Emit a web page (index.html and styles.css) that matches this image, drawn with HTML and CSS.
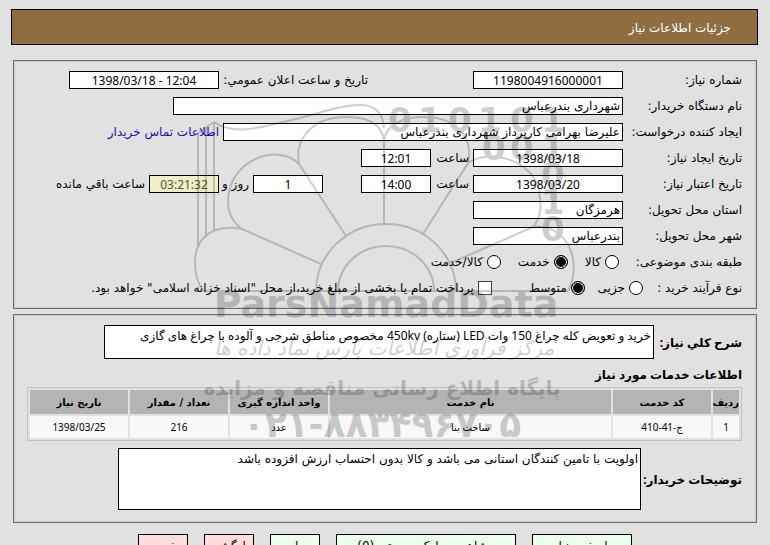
FILE: index.html
```html
<!DOCTYPE html>
<html lang="fa" dir="rtl">
<head>
    <meta charset="UTF-8">
    <meta name="viewport" content="width=device-width, initial-scale=1.0">
    <title>جزئیات اطلاعات نیاز</title>
    <link rel="stylesheet" href="styles.css">
</head>
<body>
    <h1 class="title">جزئیات اطلاعات نیاز</h1>

    <form class="page">
        <fieldset class="box info">
            <div class="row">
                <label class="name" for="needNo">شماره نیاز:</label>
                <input class="mid num" id="needNo" type="text" value="1198004916000001" readonly>
                <label class="announce" for="announceDate">تاریخ و ساعت اعلان عمومي:</label>
                <input class="mid num" id="announceDate" type="text" dir="ltr" value="1398/03/18 - 12:04" readonly>
            </div>
            <div class="row">
                <label class="name" for="buyer">نام دستگاه خریدار:</label>
                <input class="org" id="buyer" type="text" value="شهرداری بندرعباس" readonly>
            </div>
            <div class="row">
                <label class="name" for="creator">ایجاد کننده درخواست:</label>
                <input class="person" id="creator" type="text" value="علیرضا بهرامی کارپرداز شهرداری بندرعباس" readonly>
                <a class="contact" href="#">اطلاعات تماس خریدار</a>
            </div>
            <div class="row">
                <label class="name" for="createDate">تاریخ ایجاد نیاز:</label>
                <input class="mid num" id="createDate" type="text" value="1398/03/18" readonly>
                <label class="hour" for="createTime">ساعت</label>
                <input class="short num" id="createTime" type="text" value="12:01" readonly>
            </div>
            <div class="row">
                <label class="name" for="validDate">تاریخ اعتبار نیاز:</label>
                <input class="mid num" id="validDate" type="text" value="1398/03/20" readonly>
                <label class="hour" for="validTime">ساعت</label>
                <input class="short num" id="validTime" type="text" value="14:00" readonly>
                <input class="short num days" id="days" type="text" value="1" readonly>
                <label class="and" for="days">روز و</label>
                <input class="short num left" id="timeLeft" type="text" value="03:21:32" readonly>
                <label class="remain" for="timeLeft">ساعت باقي مانده</label>
            </div>
            <div class="row">
                <label class="name" for="state">استان محل تحویل:</label>
                <input class="mid" id="state" type="text" value="هرمزگان" readonly>
            </div>
            <div class="row">
                <label class="name" for="city">شهر محل تحویل:</label>
                <input class="mid" id="city" type="text" value="بندرعباس" readonly>
            </div>
            <div class="row">
                <span class="name">طبقه بندی موضوعی:</span>
                <div class="choices kinds">
                    <label><input type="radio" name="kind">کالا</label>
                    <label><input type="radio" name="kind" checked>خدمت</label>
                    <label><input type="radio" name="kind">کالا/خدمت</label>
                </div>
            </div>
            <div class="row">
                <span class="name process">نوع فرآیند خرید :</span>
                <div class="choices sizes">
                    <label><input type="radio" name="size">جزیی</label>
                    <label><input type="radio" name="size" checked>متوسط</label>
                </div>
                <label class="pay"><input type="checkbox">پرداخت تمام یا بخشی از مبلغ خرید،از محل "اسناد خزانه اسلامی" خواهد بود.</label>
            </div>
        </fieldset>

        <fieldset class="box">
            <div class="note">
                <label for="summary">شرح کلي نیاز:</label>
                <textarea class="summary" id="summary" readonly>خرید و تعویض کله چراغ 150 وات LED (ستاره) 450kv مخصوص مناطق شرجی و آلوده با چراغ های گازی</textarea>
            </div>
            <h2>اطلاعات خدمات مورد نیاز</h2>
            <table>
                <thead>
                    <tr>
                        <th class="c-row">ردیف</th>
                        <th class="c-mid">کد خدمت</th>
                        <th>نام خدمت</th>
                        <th class="c-mid">واحد اندازه گیری</th>
                        <th class="c-mid">تعداد / مقدار</th>
                        <th class="c-mid">تاریخ نیاز</th>
                    </tr>
                </thead>
                <tbody>
                    <tr>
                        <td>1</td>
                        <td>ج-41-410</td>
                        <td>ساخت بنا</td>
                        <td>عدد</td>
                        <td>216</td>
                        <td>1398/03/25</td>
                    </tr>
                </tbody>
            </table>
            <div class="note wide">
                <label for="remarks">توضیحات خریدار:</label>
                <textarea class="remarks" id="remarks" readonly>اولویت با تامین کنندگان استانی می باشد و کالا بدون احتساب ارزش افزوده باشد</textarea>
            </div>
        </fieldset>

        <div class="buttons">
            <button type="button" class="b-mid">پاسخ به نیاز</button>
            <button type="button" class="b-big">مشاهده مدارک پیوستی (0)</button>
            <button type="button">چاپ</button>
            <button type="button" class="red">بازگشت</button>
            <button type="button" class="red">خروج</button>
        </div>
    </form>

    <svg class="watermark" viewBox="180 90 410 360" width="410" height="360" direction="ltr">
        <g fill="none" stroke="#000" stroke-width="2">
            <path d="M198 196V133M198 133L214 122M198 190V248M206 128V237M214 122V231"/>
            <path d="M214 122C235 137 265 126 300 118C340 108 381 90 384 128"/>
            <path d="M316 291A70 67 0 0 1 456 291M338 291A48 45 0 0 1 434 291M203 291H568"/>
            <path d="M321 264L242 229C212 223 195 239 195 262C195 276 198 284 203 291"/>
            <path d="M346 236L299 164C280 143 228 158 228 202C228 212 233 222 242 229"/>
            <path d="M384 225V140C380 118 358 117 345 117C315 117 294 137 299 164"/>
            <path d="M423 234L468 163C474 138 456 117 424 117C403 117 387 124 384 140"/>
            <path d="M453 262L533 227C544 214 540 200 539 190C532 160 490 148 468 163"/>
            <path d="M533 227C565 223 584 259 568 291"/>
        </g>
        <g class="digits" font-size="34">
            <text x="388 418 448 478 510 541" y="132">010101</text>
            <text x="482 510 541" y="160">001</text>
            <text x="541" y="187">0</text>
            <text x="541" y="214">1</text>
            <text x="541" y="241">0</text>
        </g>
        <text class="brand" x="386" y="317" font-size="38" text-anchor="middle">ParsNamadData</text>
        <text class="slogan" x="384" y="355" font-size="20" text-anchor="middle">مرکز فرآوری اطلاعات پارس نماد داده ها</text>
        <text class="brand" x="382" y="395" font-size="20" text-anchor="middle">پایگاه اطلاع رسانی مناقصه و مزایده</text>
        <text class="brand" x="382" y="437" font-size="36" text-anchor="middle">۰۲۱-۸۸۳۴۹۶۷۰۵</text>
    </svg>
</body>
</html>
```
FILE: styles.css
```css
* {
    box-sizing: border-box;
}
body {
    margin: 0;
    height: 100vh;
    overflow: hidden;
    padding: 9px 12px 0 11px;
    background-color: #e1e1e1;
    font-family: "DejaVu Sans", sans-serif;
    font-size: 12px;
    color: #000;
}
.title {
    margin: 0;
    height: 36px;
    padding: 0 26px;
    border: 1px solid #000;
    background-color: #8f6d40;
    color: #fff;
    font-size: 12px;
    font-weight: normal;
    line-height: 36px;
}
.page {
    margin: 15px 1px 0 2px;
}
.box {
    min-width: 0;
    margin: 0 0 5px;
    padding: 10px 14px 12px 13px;
    border: 1px solid #6e6e6e;
    box-shadow: inset 0 0 0 1px #cacaca;
}
.info {
    height: 249px;
}
.row {
    display: flex;
    align-items: center;
    height: 18px;
    margin-bottom: 8px;
    white-space: nowrap;
}
.name {
    flex: 0 0 119px;
}
input, textarea, button {
    font-family: inherit;
    font-size: 12px;
    color: #000;
}
input[type=text] {
    height: 18px;
    padding: 0 2px;
    border: 1px solid #000;
    background-color: #fff;
}
.num, .note label, .note .summary, h2, td {
    font-family: "Noto Sans", "DejaVu Sans", sans-serif;
}
.num {
    text-align: center;
}
.mid {
    width: 150px;
}
.short {
    width: 70px;
}
.org {
    width: 450px;
}
.person {
    width: 400px;
}
.announce {
    width: 149px;
    margin-right: 105px;
}
.contact {
    margin-right: 4px;
    color: #1a12a8;
    text-decoration: none;
}
.hour {
    width: 42px;
    padding-right: 4px;
}
.days {
    margin-right: 38px;
}
.and {
    width: 34px;
    padding-right: 4px;
}
.left[type=text] {
    background-color: #f0f0c8;
    color: #555530;
}
.remain {
    margin-right: 4px;
}
.choices, .choices label, .pay {
    display: flex;
    align-items: center;
}
.choices label, .pay {
    gap: 4px;
}
.kinds {
    gap: 17px;
    padding-right: 4px;
}
.sizes {
    gap: 13px;
}
.process {
    flex-basis: 99px;
}
.pay {
    margin-right: 37px;
}
input[type=radio], input[type=checkbox] {
    appearance: none;
    width: 14px;
    height: 14px;
    margin: 0;
    border: 1px solid #000;
    background-color: #fff;
}
input[type=radio] {
    border-radius: 50%;
}
input[type=radio]:checked {
    background-color: #000;
    box-shadow: inset 0 0 0 1px #fff;
}
input[type=checkbox] {
    border-color: #444;
}
.note {
    display: flex;
    align-items: center;
}
.note label, h2 {
    font-size: 12px;
    font-weight: bold;
}
.note label {
    flex: 0 0 88px;
}
.wide label {
    flex-basis: 101px;
}
textarea {
    flex: 1;
    padding: 1px 2px;
    border: 1px solid #000;
    background-color: #fff;
    line-height: 18px;
    resize: none;
    overflow: hidden;
}
.summary {
    height: 34px;
    margin-left: 77px;
}
.remarks {
    height: 62px;
    margin-left: 91px;
}
h2 {
    margin: 7px 0 3px;
    line-height: 18px;
}
table {
    width: 100%;
    margin-bottom: 7px;
    border: 1px solid #c0c0c0;
    border-spacing: 2px;
    table-layout: fixed;
    font-size: 10px;
}
th, td {
    padding: 0;
    text-align: center;
}
th {
    height: 24px;
    background-color: #b4b4b4;
}
td {
    height: 22px;
    background-color: #f8f8f8;
}
.c-row {
    width: 26px;
}
.c-mid {
    width: 98px;
}
.buttons {
    display: flex;
    justify-content: center;
    gap: 16px;
    padding-top: 6px;
}
button {
    width: 50px;
    height: 24px;
    padding: 0;
    border: 1px solid #000;
    background-color: #ecffec;
    white-space: nowrap;
}
.b-mid {
    width: 100px;
}
.b-big {
    width: 180px;
}
.red {
    background-color: #ffdcdc;
}
/* logo laid over the whole form */
.watermark {
    position: absolute;
    top: 90px;
    left: 180px;
    opacity: 0.19;
    pointer-events: none;
}
.digits, .brand {
    font-family: "DejaVu Sans", sans-serif;
    font-weight: bold;
}
.slogan {
    font-family: "DejaVu Sans", sans-serif;
    font-style: italic;
}
```
